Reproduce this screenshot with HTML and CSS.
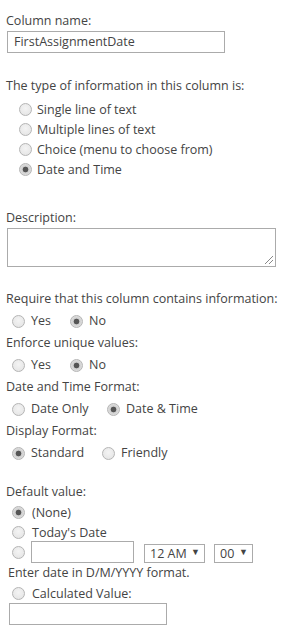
FILE: index.html
```html
<!DOCTYPE html>
<html lang="en">
<head>
  <meta charset="UTF-8" />
  <title>Column settings</title>
  <link rel="stylesheet" href="styles.css">
</head>
<body>
  <div class="form">
    <div class="label first">Column name:</div>
    <div class="text-input name-input">FirstAssignmentDate</div>

    <div class="label type-label">The type of information in this column is:</div>
    <div class="type-list">
      <label class="opt"><input type="radio" name="type"> Single line of text</label>
      <label class="opt"><input type="radio" name="type"> Multiple lines of text</label>
      <label class="opt"><input type="radio" name="type"> Choice (menu to choose from)</label>
      <label class="opt"><input type="radio" name="type" checked> Date and Time</label>
    </div>

    <div class="label desc-label">Description:</div>
    <div class="textarea"><span class="grip"></span></div>

    <div class="settings">
      <div class="label row">Require that this column contains information:</div>
      <div class="inline row">
        <label class="opt w-yes"><input type="radio" name="req"> Yes</label>
        <label class="opt"><input type="radio" name="req" checked> No</label>
      </div>

      <div class="label row">Enforce unique values:</div>
      <div class="inline row">
        <label class="opt w-yes"><input type="radio" name="uniq"> Yes</label>
        <label class="opt"><input type="radio" name="uniq" checked> No</label>
      </div>

      <div class="label row">Date and Time Format:</div>
      <div class="inline row">
        <label class="opt w-dateonly"><input type="radio" name="fmt"> Date Only</label>
        <label class="opt"><input type="radio" name="fmt" checked> Date &amp; Time</label>
      </div>

      <div class="label row">Display Format:</div>
      <div class="inline row">
        <label class="opt w-standard"><input type="radio" name="disp" checked> Standard</label>
        <label class="opt"><input type="radio" name="disp"> Friendly</label>
      </div>
    </div>

    <div class="label default-label">Default value:</div>
    <div class="default-list">
      <label class="opt"><input type="radio" name="def" checked> (None)</label>
      <label class="opt"><input type="radio" name="def"> Today's Date</label>
      <div class="opt date-row">
        <input type="radio" name="def">
        <span class="text-input date-input"></span>
        <span class="select hour">12 AM <span class="caret">&#9660;</span></span>
        <span class="select minute">00 <span class="caret">&#9660;</span></span>
      </div>
      <div class="hint">Enter date in D/M/YYYY format.</div>
      <label class="opt"><input type="radio" name="def"> Calculated Value:</label>
      <div class="text-input calc-input"></div>
    </div>
  </div>
</body>
</html>
```

FILE: styles.css
```css
body {
  margin: 0;
  font-family: 'Open Sans', 'Noto Sans', sans-serif;
  font-size: 12.5px;
  color: #444;
  background: #fff;
}

.form {
  padding: 0 6px;
}

.label {
  height: 20px;
  line-height: 20px;
}

.first {
  margin-top: 11px;
}

.text-input {
  box-sizing: border-box;
  height: 22px;
  line-height: 20px;
  border: 1px solid #ababab;
  background: #fff;
}

.name-input {
  width: 218px;
  margin-left: 1px;
  padding-left: 6px;
}

.type-label {
  margin-top: 23px;
}

.type-list {
  padding-left: 13px;
  margin-top: 3px;
}

.opt {
  display: flex;
  align-items: center;
  height: 20px;
  gap: 5px;
}

/* radio look */
.opt input[type="radio"] {
  appearance: none;
  -webkit-appearance: none;
  box-sizing: border-box;
  width: 13px;
  height: 13px;
  margin: 0;
  border: 1px solid #b5b5b5;
  border-radius: 50%;
  background: radial-gradient(circle at 50% 40%, #f4f4f4 0%, #e2e2e2 100%);
  flex: none;
}

.opt input[type="radio"]:checked {
  background: radial-gradient(circle, #555 0, #555 2.5px, #cfcfcf 3.2px, #ececec 100%);
}

.desc-label {
  margin-top: 29px;
}

.textarea {
  position: relative;
  box-sizing: border-box;
  width: 269px;
  height: 39px;
  margin-left: 1px;
  border: 1px solid #ababab;
}

.grip {
  position: absolute;
  right: 2px;
  bottom: 2px;
  width: 8px;
  height: 8px;
  background: linear-gradient(135deg, transparent 0, transparent 45%, #888 46%, #888 54%, transparent 55%, transparent 72%, #888 73%, #888 80%, transparent 81%);
}

.settings {
  margin-top: 21px;
}

.row {
  height: 22px;
  line-height: 22px;
}

.inline {
  display: flex;
  padding-left: 6px;
}

.inline .opt {
  height: 22px;
  gap: 6px;
}

.w-yes {
  width: 58px;
}

.w-dateonly {
  width: 95px;
}

.w-standard {
  width: 90px;
}

.default-label {
  margin-top: 18px;
}

.default-list {
  padding-left: 6px;
}

.default-list .opt {
  gap: 7px;
}

.date-row {
  height: 22px;
  margin-top: -1px;
}

.date-input {
  width: 103px;
  margin-left: -1px;
}

.select {
  box-sizing: border-box;
  display: flex;
  align-items: center;
  height: 19px;
  border: 1px solid #ababab;
  padding-left: 5px;
  position: relative;
  top: 1px;
}

.hour {
  width: 61px;
  margin-left: 3px;
}

.minute {
  width: 39px;
  margin-left: 2px;
}

.caret {
  font-size: 9px;
  position: absolute;
  right: 4px;
  top: 0;
}

.hint {
  height: 20px;
  line-height: 20px;
  margin-left: -4px;
}

.calc-input {
  width: 158px;
  margin-left: -3px;
}
```
